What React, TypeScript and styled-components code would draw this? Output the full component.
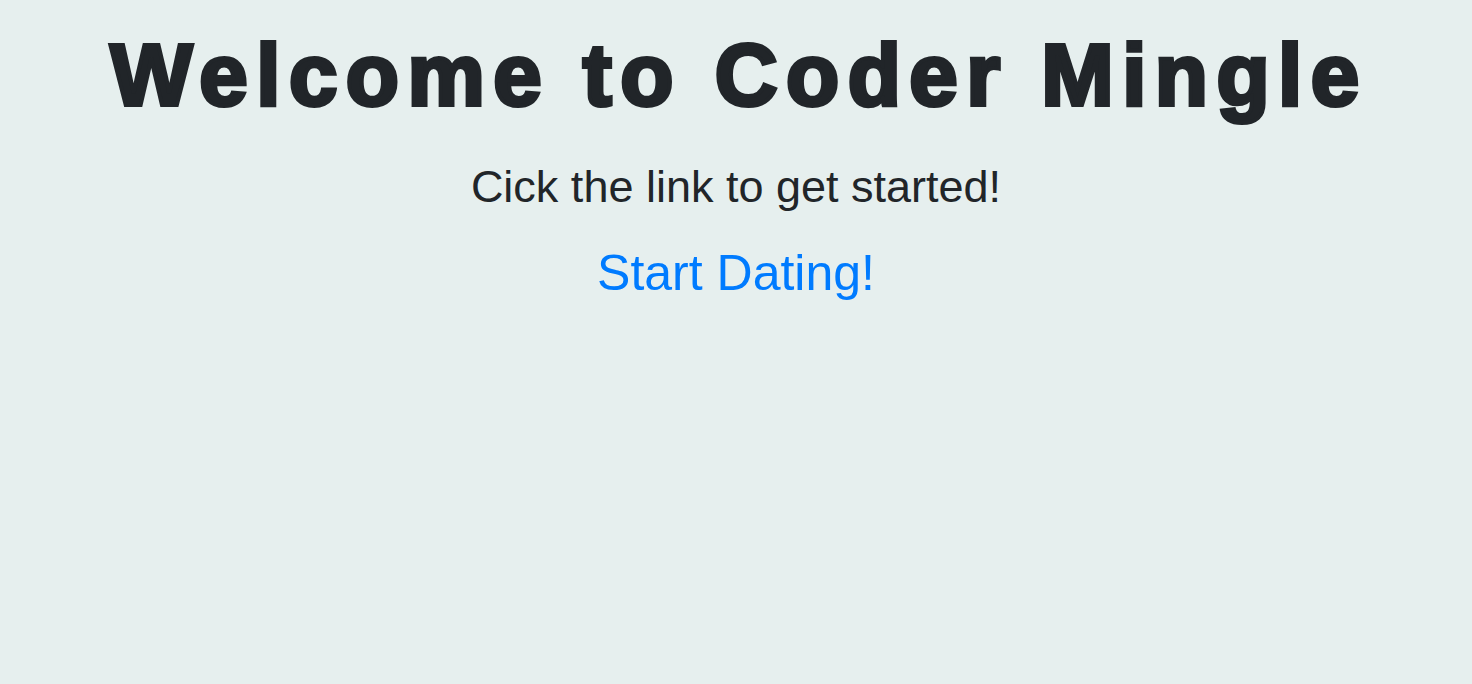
import React from "react";
import styled, { createGlobalStyle } from "styled-components";

const Global = createGlobalStyle`
  html, body { margin: 0; padding: 0; background: #e6efee; }
  body { font-family: "Liberation Sans", Arial, sans-serif; color: #212529; }
`;

const Page = styled.main`
  min-height: 684px;
  display: flex;
  flex-direction: column;
  align-items: center;
  text-align: center;
`;

const Title = styled.h1`
  margin: 22px 0 0;
  padding-left: 6px;
  font-family: "Liberation Sans", Arial, sans-serif;
  font-weight: 700;
  font-size: 87px;
  line-height: 105px;
  letter-spacing: 8.5px;
  -webkit-text-stroke: 4px #212529;
  color: #212529;
`;

const Lead = styled.p`
  margin: 33px 0 0;
  font-size: 45px;
  line-height: 54px;
`;

const StartLink = styled.a`
  display: block;
  margin-top: 29px;
  font-size: 50px;
  line-height: 60px;
  color: #007bff;
  text-decoration: none;
`;

export default function App() {
  return (
    <>
      <Global />
      <Page>
        <Title>Welcome to Coder Mingle</Title>
        <Lead>Cick the link to get started!</Lead>
        <StartLink href="#">Start Dating!</StartLink>
      </Page>
    </>
  );
}
